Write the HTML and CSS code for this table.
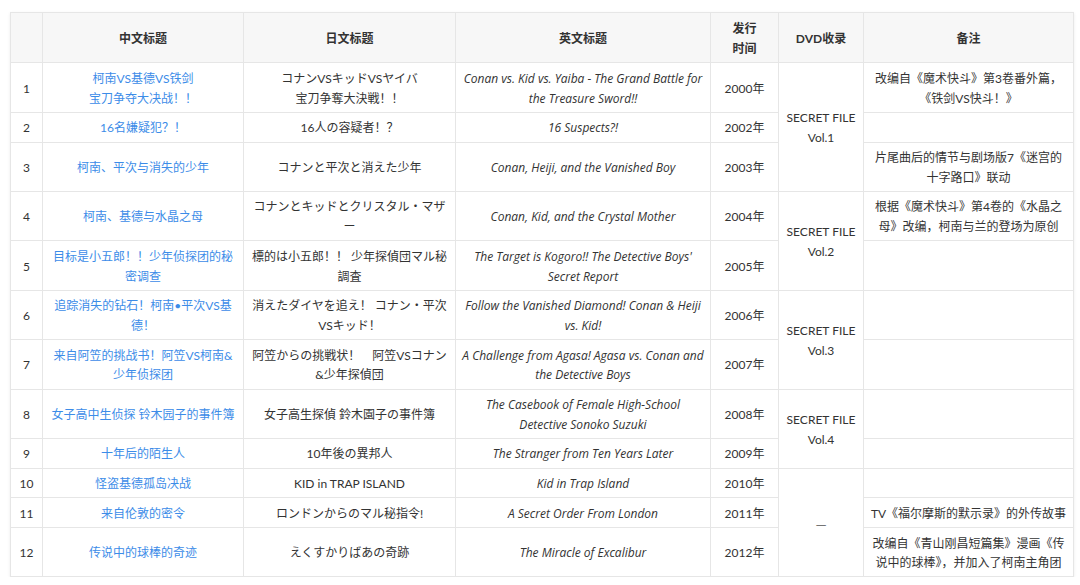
FILE: index.html
```html
<!DOCTYPE html>
<html lang="zh-CN">
<head>
<meta charset="utf-8">
<title>剧场版 OVA 列表</title>
<link rel="stylesheet" href="styles.css">
</head>
<body>
<div class="wrap">
<table class="list">
  <colgroup>
    <col class="c-no"><col class="c-zh"><col class="c-ja"><col class="c-en"><col class="c-date"><col class="c-dvd"><col class="c-note">
  </colgroup>
  <thead>
    <tr>
      <th></th>
      <th>中文标题</th>
      <th>日文标题</th>
      <th>英文标题</th>
      <th>发行<br>时间</th>
      <th>DVD收录</th>
      <th>备注</th>
    </tr>
  </thead>
  <tbody>
    <tr>
      <td>1</td>
      <td class="zh"><a href="#">柯南VS基德VS铁剑<br>宝刀争夺大决战！！</a></td>
      <td>コナンVSキッドVSヤイバ<br>宝刀争奪大決戦！！</td>
      <td class="en">Conan vs. Kid vs. Yaiba - The Grand Battle for the Treasure Sword!!</td>
      <td>2000年</td>
      <td rowspan="3">SECRET FILE<br>Vol.1</td>
      <td>改编自《魔术快斗》第3卷番外篇，《铁剑VS快斗！》</td>
    </tr>
    <tr>
      <td>2</td>
      <td class="zh"><a href="#">16名嫌疑犯？！</a></td>
      <td>16人の容疑者！？</td>
      <td class="en">16 Suspects?!</td>
      <td>2002年</td>
      <td></td>
    </tr>
    <tr>
      <td>3</td>
      <td class="zh"><a href="#">柯南、平次与消失的少年</a></td>
      <td>コナンと平次と消えた少年</td>
      <td class="en">Conan, Heiji, and the Vanished Boy</td>
      <td>2003年</td>
      <td>片尾曲后的情节与剧场版7《迷宫的十字路口》联动</td>
    </tr>
    <tr>
      <td>4</td>
      <td class="zh"><a href="#">柯南、基德与水晶之母</a></td>
      <td>コナンとキッドとクリスタル・マザー</td>
      <td class="en">Conan, Kid, and the Crystal Mother</td>
      <td>2004年</td>
      <td rowspan="2">SECRET FILE<br>Vol.2</td>
      <td>根据《魔术快斗》第4卷的《水晶之母》改编，柯南与兰的登场为原创</td>
    </tr>
    <tr>
      <td>5</td>
      <td class="zh"><a href="#">目标是小五郎！！少年侦探团的秘密调查</a></td>
      <td>標的は小五郎！！ 少年探偵団マル秘調査</td>
      <td class="en">The Target is Kogoro!! The Detective Boys' Secret Report</td>
      <td>2005年</td>
      <td></td>
    </tr>
    <tr>
      <td>6</td>
      <td class="zh"><a href="#">追踪消失的钻石！柯南•平次VS基德！</a></td>
      <td>消えたダイヤを追え！ コナン・平次VSキッド！</td>
      <td class="en">Follow the Vanished Diamond! Conan &amp; Heiji vs. Kid!</td>
      <td>2006年</td>
      <td rowspan="2">SECRET FILE<br>Vol.3</td>
      <td></td>
    </tr>
    <tr>
      <td>7</td>
      <td class="zh"><a href="#">来自阿笠的挑战书！阿笠VS柯南&amp;少年侦探团</a></td>
      <td>阿笠からの挑戦状！　阿笠VSコナン&amp;少年探偵団</td>
      <td class="en">A Challenge from Agasa! Agasa vs. Conan and the Detective Boys</td>
      <td>2007年</td>
      <td></td>
    </tr>
    <tr>
      <td>8</td>
      <td class="zh"><a href="#">女子高中生侦探 铃木园子的事件簿</a></td>
      <td>女子高生探偵 鈴木園子の事件簿</td>
      <td class="en">The Casebook of Female High-School Detective Sonoko Suzuki</td>
      <td>2008年</td>
      <td rowspan="2">SECRET FILE<br>Vol.4</td>
      <td></td>
    </tr>
    <tr>
      <td>9</td>
      <td class="zh"><a href="#">十年后的陌生人</a></td>
      <td>10年後の異邦人</td>
      <td class="en">The Stranger from Ten Years Later</td>
      <td>2009年</td>
      <td></td>
    </tr>
    <tr>
      <td>10</td>
      <td class="zh"><a href="#">怪盗基德孤岛决战</a></td>
      <td>KID in TRAP ISLAND</td>
      <td class="en">Kid in Trap Island</td>
      <td>2010年</td>
      <td rowspan="3" class="dash">—</td>
      <td></td>
    </tr>
    <tr>
      <td>11</td>
      <td class="zh"><a href="#">来自伦敦的密令</a></td>
      <td>ロンドンからのマル秘指令!</td>
      <td class="en">A Secret Order From London</td>
      <td>2011年</td>
      <td>TV《福尔摩斯的默示录》的外传故事</td>
    </tr>
    <tr>
      <td>12</td>
      <td class="zh"><a href="#">传说中的球棒的奇迹</a></td>
      <td>えくすかりばあの奇跡</td>
      <td class="en">The Miracle of Excalibur</td>
      <td>2012年</td>
      <td>改编自《青山刚昌短篇集》漫画《传说中的球棒》，并加入了柯南主角团</td>
    </tr>
  </tbody>
</table>
</div>
</body>
</html>
```

FILE: styles.css
```css
html, body {
  margin: 0;
  padding: 0;
  background: #ffffff;
}

.wrap {
  padding: 12px 7px 0 10px;
}

.list {
  width: 1063px;
  table-layout: fixed;
  border-collapse: collapse;
  font-family: "Lato", "Noto Sans CJK SC", sans-serif;
  font-size: 12px;
  line-height: 19.7px;
  color: #333333;
  box-shadow: 0 1px 3px rgba(0, 0, 0, 0.08);
}

.c-no { width: 32px; }
.c-zh { width: 201px; }
.c-ja { width: 212px; }
.c-en { width: 255px; }
.c-date { width: 68px; }
.c-dvd { width: 85px; }
.c-note { width: 210px; }

.list th,
.list td {
  border: 1px solid #e6e6e6;
  padding: 5.5px 6px 3.5px;
  text-align: center;
  vertical-align: middle;
  font-weight: normal;
}

.list th {
  background: #f7f7f7;
  font-weight: bold;
  padding: 6px 6px 4px;
}

.list a {
  color: #3c8ce8;
  text-decoration: none;
}

.list td.en {
  font-family: "Open Sans", "Noto Sans CJK SC", sans-serif;
  font-style: italic;
  font-size: 12px;
}

.list td.dash {
  font-family: "Noto Sans CJK SC", sans-serif;
  color: #555555;
}
```
